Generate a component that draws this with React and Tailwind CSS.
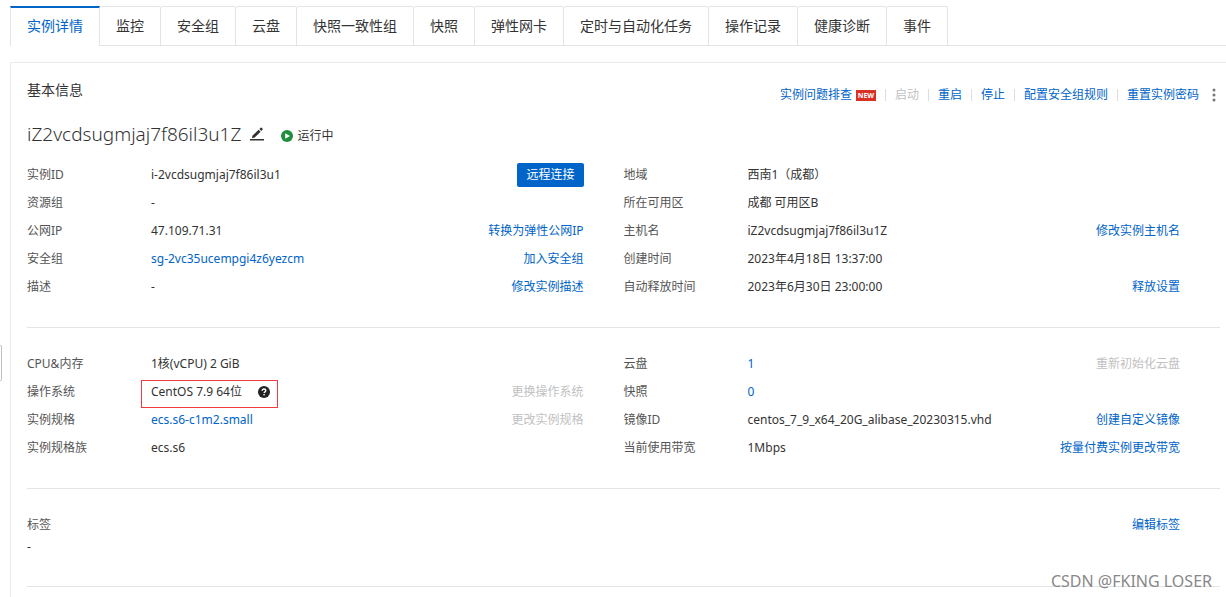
import React, { useState } from 'react';
import clsx from 'clsx';

const tabs = ['实例详情', '监控', '安全组', '云盘', '快照一致性组', '快照', '弹性网卡', '定时与自动化任务', '操作记录', '健康诊断', '事件'];

const basicInfo = [
  [
    { label: '实例ID', value: 'i-2vcdsugmjaj7f86il3u1', action: '远程连接', primary: true },
    { label: '资源组', value: '-' },
    { label: '公网IP', value: '47.109.71.31', action: '转换为弹性公网IP' },
    { label: '安全组', value: 'sg-2vc35ucempgi4z6yezcm', link: true, action: '加入安全组' },
    { label: '描述', value: '-', action: '修改实例描述' },
  ],
  [
    { label: '地域', value: '西南1（成都）' },
    { label: '所在可用区', value: '成都 可用区B' },
    { label: '主机名', value: 'iZ2vcdsugmjaj7f86il3u1Z', action: '修改实例主机名' },
    { label: '创建时间', value: '2023年4月18日 13:37:00' },
    { label: '自动释放时间', value: '2023年6月30日 23:00:00', action: '释放设置' },
  ],
];

const configInfo = [
  [
    { label: 'CPU&内存', value: '1核(vCPU) 2 GiB' },
    { label: '操作系统', value: 'CentOS 7.9 64位', marked: true, action: '更换操作系统', disabled: true },
    { label: '实例规格', value: 'ecs.s6-c1m2.small', link: true, action: '更改实例规格', disabled: true },
    { label: '实例规格族', value: 'ecs.s6' },
  ],
  [
    { label: '云盘', value: '1', link: true, action: '重新初始化云盘', disabled: true },
    { label: '快照', value: '0', link: true },
    { label: '镜像ID', value: 'centos_7_9_x64_20G_alibase_20230315.vhd', action: '创建自定义镜像' },
    { label: '当前使用带宽', value: '1Mbps', action: '按量付费实例更改带宽' },
  ],
];

const PencilIcon = () => (
  <svg width="16" height="16" viewBox="0 0 16 16" fill="#333">
    <path d="M3 12l.4-2.3 6.2-6 2 2-6.2 6L3 12zM10.4 3l1.3-1.3c.3-.3.6-.3.9 0l1 1c.3.3.3.6 0 .9L12.3 4.9 10.4 3z" />
    <rect x="1" y="13" width="14" height="1.5" />
  </svg>
);

const RunningIcon = () => (
  <svg width="12" height="12" viewBox="0 0 12 12">
    <circle cx="6" cy="6" r="6" fill="#1e8e3e" />
    <path d="M4.2 3.2v5.6L9 6z" fill="#fff" />
  </svg>
);

const HelpIcon = () => (
  <svg width="12" height="12" viewBox="0 0 12 12">
    <circle cx="6" cy="6" r="6" fill="#222" />
    <path d="M4.2 4.8C4.2 3.7 5 3 6 3s1.8.7 1.8 1.6c0 1.2-1.7 1.3-1.7 2.5" fill="none" stroke="#fff" strokeWidth="1.4" />
    <rect x="5.4" y="8" width="1.4" height="1.4" fill="#fff" />
  </svg>
);

const MoreIcon = () => (
  <svg width="12" height="14" viewBox="0 0 12 14" fill="#777">
    <circle cx="6" cy="2" r="1.5" />
    <circle cx="6" cy="7" r="1.5" />
    <circle cx="6" cy="12" r="1.5" />
  </svg>
);

const Separator = () => <span className="mx-[9px] h-3 w-px bg-[#dedede]" />;

const RowAction = ({ row }) => {
  if (row.primary) {
    return (
      <button className="h-6 rounded-[2px] bg-[#0064c8] px-[9px] text-white">{row.action}</button>
    );
  }
  if (row.disabled) {
    return <button disabled className="text-[#c1c1c1]">{row.action}</button>;
  }
  return <a href="#" className="text-[#0064c8]">{row.action}</a>;
};

const InfoRow = ({ row }) => (
  <div className="flex h-7 items-center">
    <dt className="w-[124px] shrink-0 text-[#555]">{row.label}</dt>
    <dd className="flex h-full flex-1 items-center justify-between whitespace-nowrap">
      <span className="relative flex items-center gap-4">
        {row.link ? <a href="#" className="text-[#0064c8]">{row.value}</a> : row.value}
        {row.marked && <HelpIcon />}
        {row.marked && <span className="absolute -top-[3px] -right-2 -bottom-[7px] -left-[10px] border border-[#f03a3e]" />}
      </span>
      {row.action && <RowAction row={row} />}
    </dd>
  </div>
);

const InfoSection = ({ columns, className }) => (
  <section className={clsx('grid grid-cols-2 border-b border-[#e3e4e6] pb-[26px]', className)}>
    {columns.map((rows, index) => (
      <dl key={index} className="pr-10">
        {rows.map((row) => (
          <InfoRow key={row.label} row={row} />
        ))}
      </dl>
    ))}
  </section>
);

const App = () => {
  const [activeTab, setActiveTab] = useState(tabs[0]);

  return (
    <div className="relative flex min-h-screen flex-col overflow-hidden bg-white pt-[6px] pl-[10px] font-['Noto_Sans','Noto_Sans_CJK_SC',sans-serif] text-[12px] leading-[18px] text-[#333]">
      {/* collapsed sidebar handle */}
      <div className="absolute top-[345px] left-0 h-9 w-[2px] rounded-r-sm border border-l-0 border-[#c0c0c0]" />

      <div role="tablist" className="flex">
        {tabs.map((tab, index) => (
          <button
            key={tab}
            role="tab"
            aria-selected={tab === activeTab}
            onClick={() => setActiveTab(tab)}
            className={clsx(
              'h-10 shrink-0 border-r border-[#e3e4e6] px-4 text-[14px]',
              index === 0 && 'border-l',
              tab === activeTab
                ? 'border-t-2 border-t-[#0064c8] pb-0.5 text-[#0064c8]'
                : 'rounded-t-[2px] border-t border-b'
            )}
          >
            {tab}
          </button>
        ))}
        <div className="flex-1 border-b border-[#e3e4e6]" />
      </div>

      <main className="mt-4 flex-1 rounded-tl-[2px] border-t border-l border-[#ebebeb] pt-4 pr-[6px] pl-4">
        <header className="flex items-start justify-between">
          <h2 className="text-[14px] leading-[22px]">基本信息</h2>
          <div className="flex items-center pt-[6px] leading-5 whitespace-nowrap text-[#0064c8]">
            <a href="#">实例问题排查</a>
            <span className="ml-1 h-[11px] w-5 bg-[#d93026] text-center text-[7px] leading-[11px] font-bold text-white">NEW</span>
            <Separator />
            <button disabled className="text-[#c1c1c1]">启动</button>
            <Separator />
            <button>重启</button>
            <Separator />
            <button>停止</button>
            <Separator />
            <a href="#">配置安全组规则</a>
            <Separator />
            <a href="#">重置实例密码</a>
            <button aria-label="更多" className="ml-[9px]"><MoreIcon /></button>
          </div>
        </header>

        <div className="mt-[14px] flex items-center">
          <h1 className="text-[19px] leading-[30px] font-light">iZ2vcdsugmjaj7f86il3u1Z</h1>
          <button aria-label="编辑" className="ml-2"><PencilIcon /></button>
          <span className="mt-1 ml-4 flex items-center gap-1">
            <RunningIcon />
            运行中
          </span>
        </div>

        <InfoSection columns={basicInfo} className="mt-3" />
        <InfoSection columns={configInfo} className="pt-[22px]" />

        <section className="border-b border-[#e3e4e6] pt-[22px] pb-[31px]">
          <div className="flex h-7 items-center justify-between pr-10">
            <h3 className="text-[#555]">标签</h3>
            <a href="#" className="text-[#0064c8]">编辑标签</a>
          </div>
          <p className="leading-4">-</p>
        </section>
      </main>

      <div className="absolute right-[14px] bottom-1 text-[16px] leading-6 text-[#888]">CSDN @FKING LOSER</div>
    </div>
  );
};

export default App;
